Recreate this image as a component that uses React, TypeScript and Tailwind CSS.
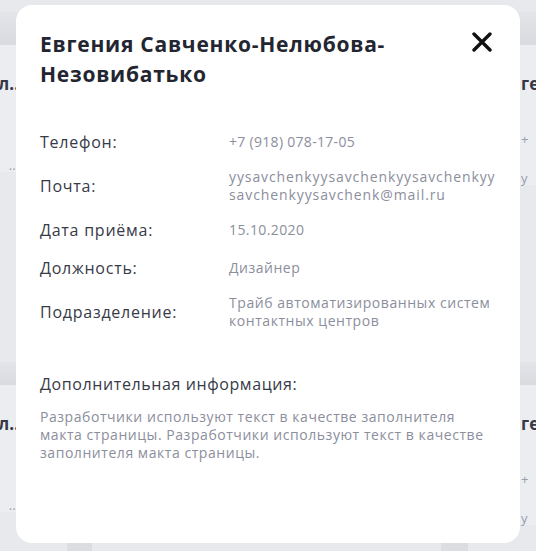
const rows: { label: string; lines: string[]; track: string }[] = [
  { label: "Телефон:", lines: ["+7 (918) 078-17-05"], track: "tracking-[0.3px]" },
  {
    label: "Почта:",
    lines: ["yysavchenkyysavchenkyysavchenkyy", "savchenkyysavchenk@mail.ru"],
    track: "tracking-[0.9px]",
  },
  { label: "Дата приёма:", lines: ["15.10.2020"], track: "tracking-[0.4px]" },
  { label: "Должность:", lines: ["Дизайнер"], track: "tracking-[0.5px]" },
  {
    label: "Подразделение:",
    lines: ["Трайб автоматизированных систем", "контактных центров"],
    track: "tracking-[0.55px]",
  },
];

function BgCard({
  title,
  lines,
  side,
  band,
}: {
  title: string;
  lines: string[];
  side: "left" | "right";
  band: string;
}) {
  return (
    <div className="flex w-[240px] flex-col bg-[#ecedf1]">
      <div className={`${band} bg-gradient-to-b from-[#e4e5e9] to-[#d9dadf]`} />
      <div
        className={`flex flex-col px-4 ${side === "left" ? "items-end text-right" : "items-start"}`}
      >
        <p className="mt-[28px] text-[17px] font-bold leading-[22px] text-[#353846]">{title}</p>
        <div className="mt-[38px] flex flex-col gap-[26px] text-[13px] leading-[13px] text-[#9a9daa]">
          {lines.map((l, i) => (
            <span key={i}>{l}</span>
          ))}
        </div>
      </div>
    </div>
  );
}

function Background() {
  return (
    <div className="flex h-full w-full justify-between">
      <div className="ml-[-205px] flex flex-col">
        <div className="mt-[12px] h-[338px]">
          <BgCard side="left" title="л.." lines={["", "..."]} band="h-[33px]" />
        </div>
        <div className="mt-[12px]">
          <BgCard side="left" title="л.." lines={["", "..."]} band="h-[23px]" />
        </div>
      </div>
      <div className="flex flex-1 items-end justify-between pl-[32px] pr-[37px]">
        <div className="h-[8px] w-[25px] bg-[#dcdde1]" />
        <div className="h-[8px] w-[27px] bg-[#dcdde1]" />
      </div>
      <div className="mr-[-209px] flex flex-col">
        <div className="mt-[12px] h-[338px]">
          <BgCard side="right" title="ге" lines={["+", "у"]} band="h-[33px]" />
        </div>
        <div className="mt-[12px]">
          <BgCard side="right" title="ге" lines={["+", "у"]} band="h-[23px]" />
        </div>
      </div>
    </div>
  );
}

export default function App() {
  return (
    <div
      className="relative h-[551px] w-[536px] overflow-hidden bg-[#e8e9ed]"
      style={{ fontFamily: '"Open Sans", "Noto Sans", sans-serif' }}
    >
      <Background />

      <div className="absolute left-[16px] top-[5px] flex h-[538px] w-[504px] flex-col rounded-[16px] bg-white px-6 pt-6">
        <div className="flex items-start justify-between">
          <h2 className="w-[400px] text-[21px] font-bold leading-[30px] tracking-[0.75px] text-[#232631]">
            Евгения Савченко-Нелюбова-Незовибатько
          </h2>
          <button className="mr-1 mt-[3px]" aria-label="Закрыть">
            <svg width="20" height="20" viewBox="0 0 20 20" fill="none">
              <path
                d="M2 2 18 18M18 2 2 18"
                stroke="#111"
                strokeWidth="3.4"
                strokeLinecap="round"
              />
            </svg>
          </button>
        </div>

        <dl className="mt-[41px] flex flex-col gap-[14px]">
          {rows.map((r) => (
            <div key={r.label} className="flex items-center">
              <dt className="w-[189px] shrink-0 text-[16px] leading-6 tracking-[0.75px] text-[#373a47]">
                {r.label}
              </dt>
              <dd className={`flex flex-1 flex-col text-[14px] leading-[18px] text-[#8b8e9c] ${r.track}`}>
                {r.lines.map((l) => (
                  <span key={l} className="whitespace-nowrap">
                    {l}
                  </span>
                ))}
              </dd>
            </div>
          ))}
        </dl>

        <p className="mt-[42px] text-[16px] leading-6 tracking-[0.6px] text-[#373a47]">
          Дополнительная информация:
        </p>
        <p className="mt-3 text-[14px] leading-[18px] tracking-[0.55px] text-[#8b8e9c]">
          Разработчики используют текст в качестве заполнителя макта страницы. Разработчики
          используют текст в качестве заполнителя макта страницы.
        </p>
      </div>
    </div>
  );
}
